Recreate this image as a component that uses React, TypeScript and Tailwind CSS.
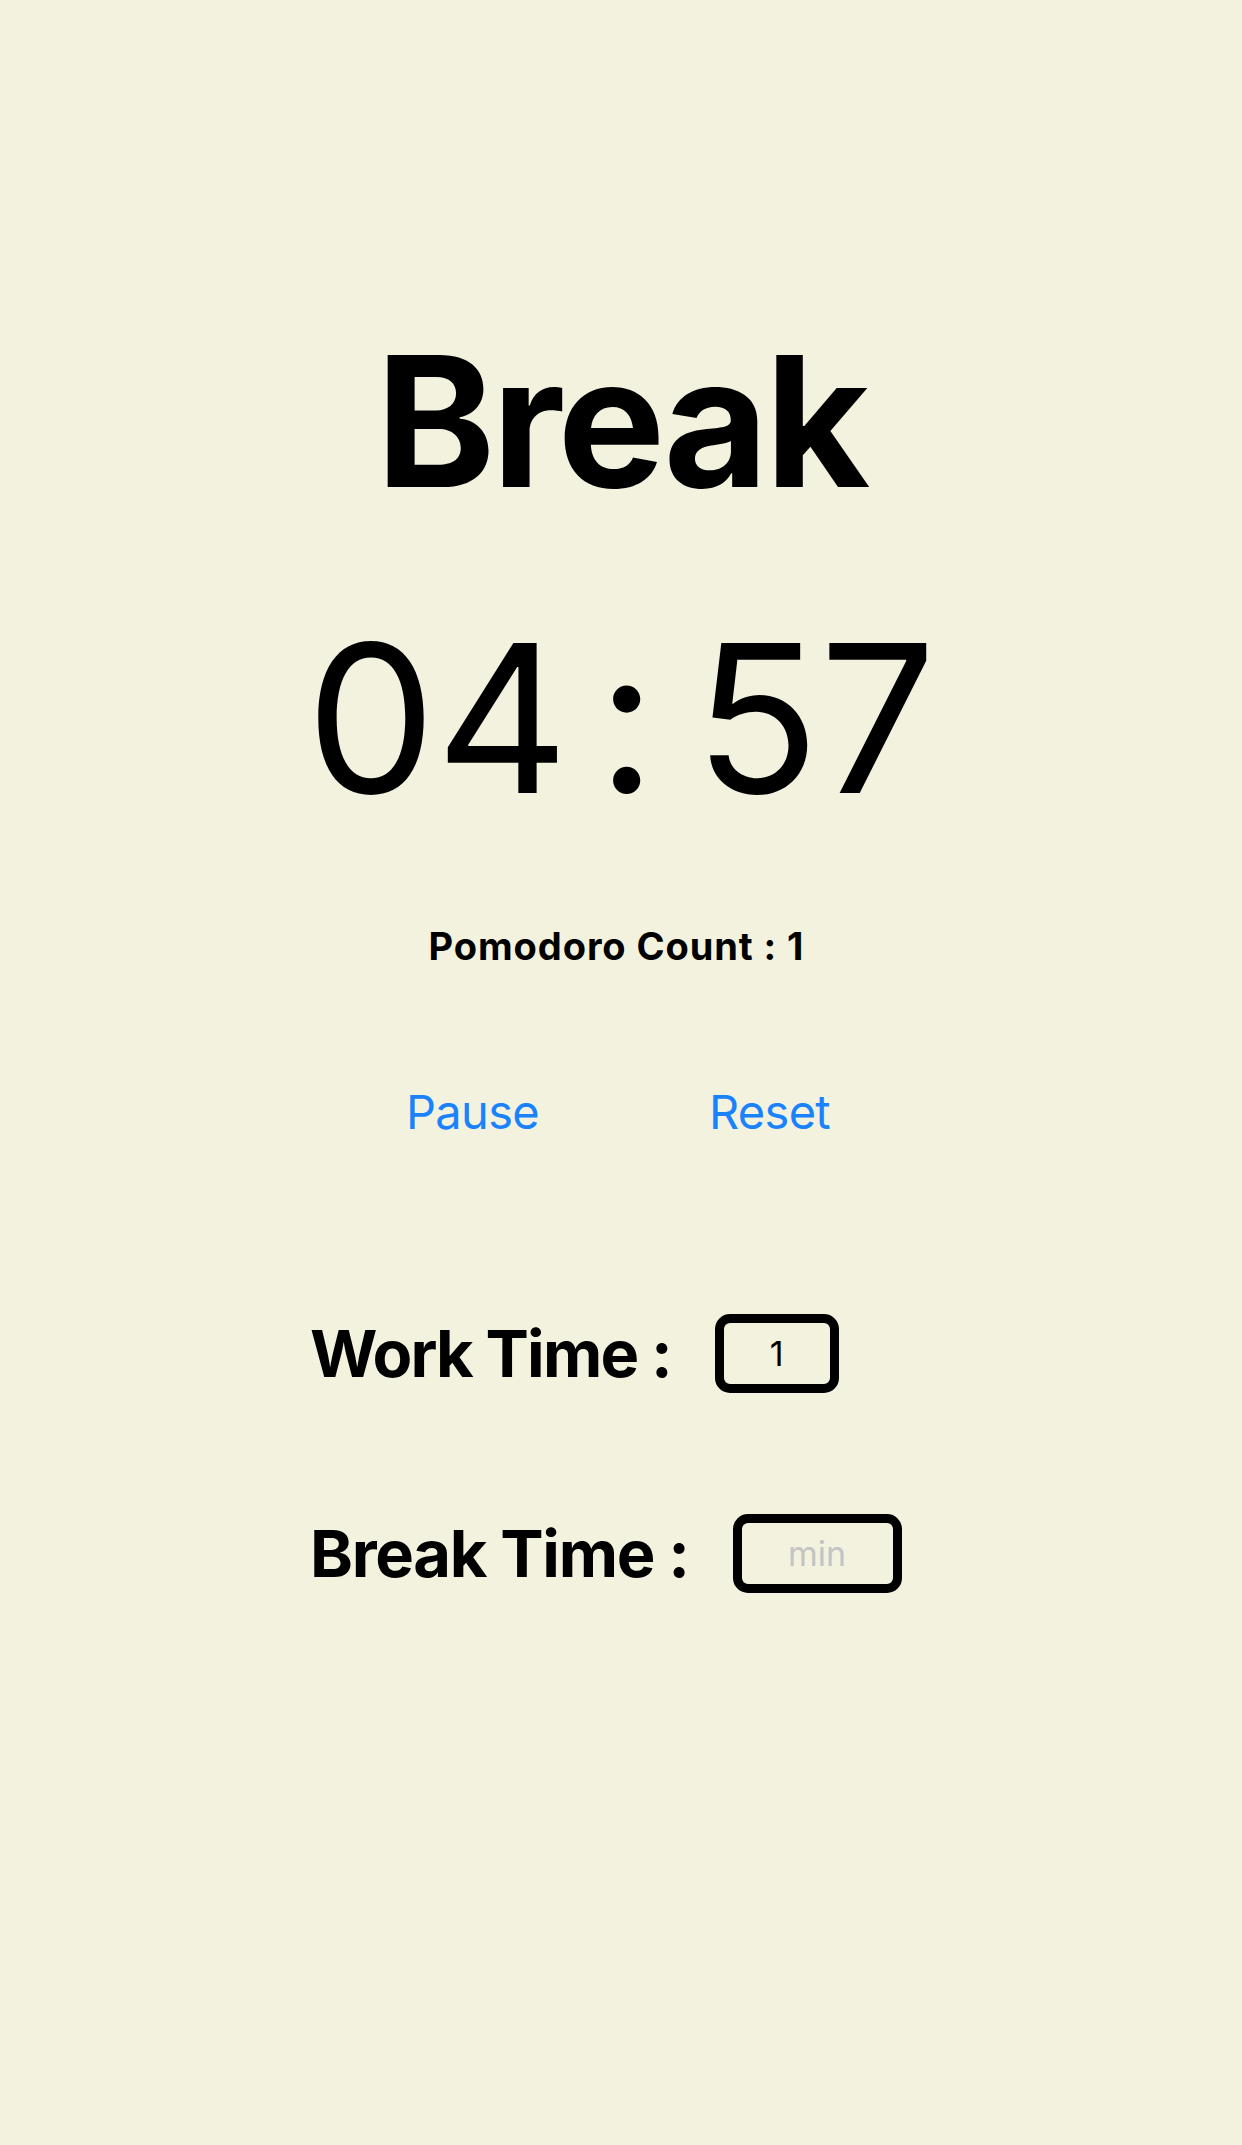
import React, { useState } from 'react'

export default function App() {
  const [workTime, setWorkTime] = useState('1')
  const [breakTime, setBreakTime] = useState('')

  return (
    <div className="min-h-screen bg-[#f3f2de] flex flex-col items-center font-['Inter',sans-serif] text-black">
      {/* Mode title */}
      <h1 className="mt-[331px] text-[181px] font-bold leading-none tracking-[-0.02em]">Break</h1>

      {/* Countdown */}
      <div className="mt-[103px] flex items-baseline text-[206px] leading-none whitespace-nowrap">
        <span>04</span>
        <span className="ml-[28px] mr-[38px]">:</span>
        <span>57</span>
      </div>

      <p className="mt-[106px] mr-[9px] text-[38px] font-bold leading-none tracking-[0.024em]">
        Pomodoro Count : 1
      </p>

      {/* Controls */}
      <div className="mt-[123px] flex">
        <button className="w-[297px] text-[47px] leading-none tracking-[-0.015em] text-[#1a82fb]">Pause</button>
        <button className="w-[297px] text-[47px] leading-none tracking-[-0.015em] text-[#1a82fb]">Reset</button>
      </div>

      {/* Settings */}
      <div className="mt-[179px] self-start ml-[310px] flex flex-col gap-[121px]">
        <SettingRow label="Work Time :" boxWidth="w-[124px]" tracking="tracking-[-0.028em]">
          <input
            value={workTime}
            onChange={(e) => setWorkTime(e.target.value)}
            className="w-full h-full bg-transparent text-center text-[34px] outline-none"
          />
        </SettingRow>
        <SettingRow label="Break Time :" boxWidth="w-[169px]" tracking="tracking-[-0.02em]">
          <input
            value={breakTime}
            onChange={(e) => setBreakTime(e.target.value)}
            placeholder="min"
            className="w-full h-full bg-transparent text-center text-[34px] outline-none placeholder:text-[#c4c4c4]"
          />
        </SettingRow>
      </div>
    </div>
  )
}

function SettingRow({
  label,
  boxWidth,
  tracking,
  children,
}: {
  label: string
  boxWidth: string
  tracking: string
  children: React.ReactNode
}) {
  return (
    <div className="flex items-center gap-[44px]">
      <span className={`whitespace-nowrap text-[65px] font-bold leading-none ${tracking}`}>{label}</span>
      <div className={`${boxWidth} h-[79px] border-[9px] border-black rounded-[15px]`}>{children}</div>
    </div>
  )
}
